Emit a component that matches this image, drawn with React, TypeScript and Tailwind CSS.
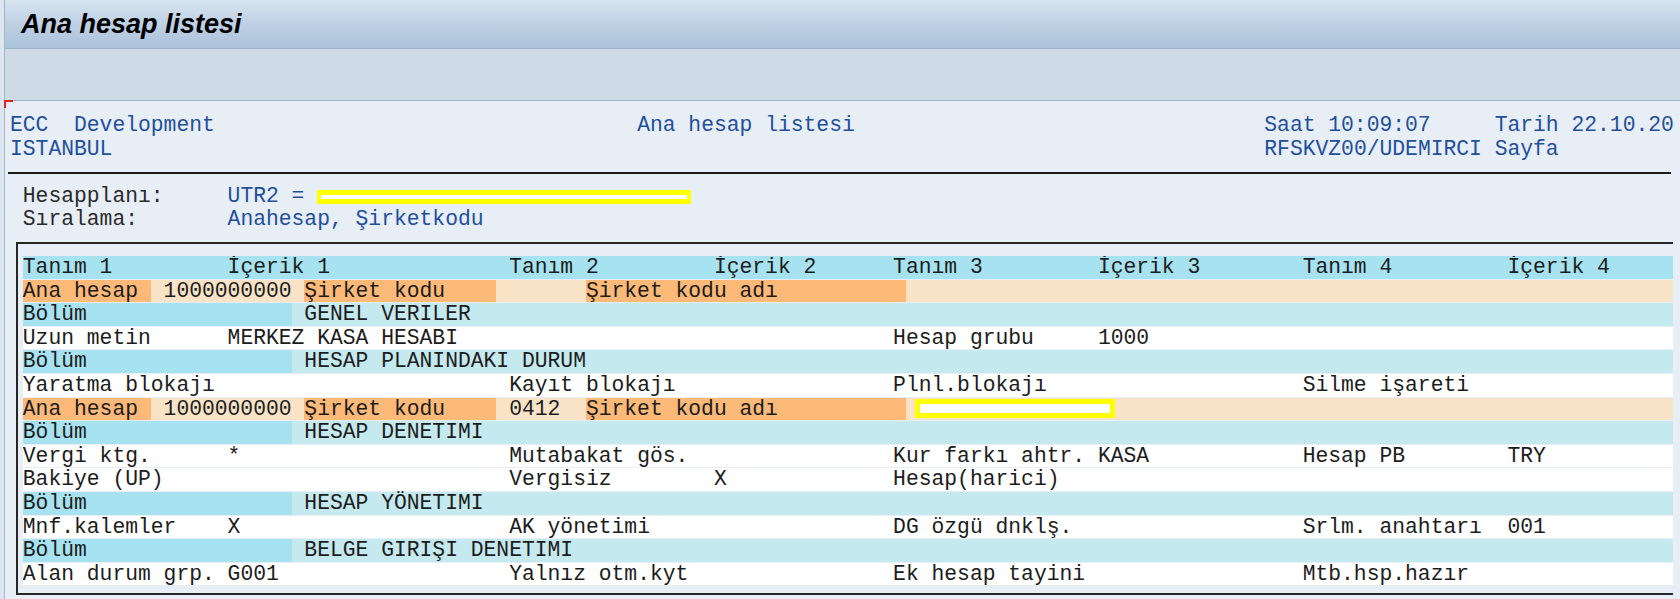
import React from 'react';

type Row =
  | { kind: 'head'; cells: string[] }
  | { kind: 'data'; cells: string[] }
  | { kind: 'account'; code: string; masked?: boolean }
  | { kind: 'section'; title: string };

const rows: Row[] = [
  { kind: 'head', cells: ['Tanım 1', 'İçerik 1', 'Tanım 2', 'İçerik 2', 'Tanım 3', 'İçerik 3', 'Tanım 4', 'İçerik 4'] },
  { kind: 'account', code: '' },
  { kind: 'section', title: 'GENEL VERILER' },
  { kind: 'data', cells: ['Uzun metin', 'MERKEZ KASA HESABI', '', '', 'Hesap grubu', '1000', '', ''] },
  { kind: 'section', title: 'HESAP PLANINDAKI DURUM' },
  { kind: 'data', cells: ['Yaratma blokajı', '', 'Kayıt blokajı', '', 'Plnl.blokajı', '', 'Silme işareti', ''] },
  { kind: 'account', code: '0412', masked: true },
  { kind: 'section', title: 'HESAP DENETIMI' },
  { kind: 'data', cells: ['Vergi ktg.', '*', 'Mutabakat gös.', '', 'Kur farkı ahtr.', 'KASA', 'Hesap PB', 'TRY'] },
  { kind: 'data', cells: ['Bakiye (UP)', '', 'Vergisiz', 'X', 'Hesap(harici)', '', '', ''] },
  { kind: 'section', title: 'HESAP YÖNETIMI' },
  { kind: 'data', cells: ['Mnf.kalemler', 'X', 'AK yönetimi', '', 'DG özgü dnklş.', '', 'Srlm. anahtarı', '001'] },
  { kind: 'section', title: 'BELGE GIRIŞI DENETIMI' },
  { kind: 'data', cells: ['Alan durum grp.', 'G001', 'Yalnız otm.kyt', '', 'Ek hesap tayini', '', 'Mtb.hsp.hazır', ''] },
];

// one list line in the SAP report
const line = 'flex h-[23.6px] shrink-0 items-center whitespace-pre';
const rowBox = 'h-[23.6px] shrink-0 border-b border-[#e8eef6] whitespace-pre text-[#1c1c1c]';
const grid = 'grid grid-cols-[16ch_22ch_16ch_14ch_16ch_16ch_16ch_1fr]';

function ListRow({ row }: { row: Row }) {
  if (row.kind === 'head' || row.kind === 'data') {
    return (
      <div className={`${rowBox} ${grid} ${row.kind === 'head' ? 'bg-[#a7e2f0]' : 'bg-white'}`}>
        {row.cells.map((c, i) => (
          <span key={i} className="overflow-hidden">{c}</span>
        ))}
      </div>
    );
  }

  if (row.kind === 'section') {
    return (
      <div className={`${rowBox} flex`}>
        <span className="w-[21ch] shrink-0 bg-[#a7e2f0]">Bölüm</span>
        <span className="flex-1 bg-[#c4e9ee] pl-[1ch]">{row.title}</span>
      </div>
    );
  }

  return (
    <div className={`${rowBox} flex`}>
      <span className="w-[10ch] shrink-0 bg-[#fcb978]">Ana hesap</span>
      <span className="w-[12ch] shrink-0 bg-[#f8e3c7] pl-[1ch]">1000000000</span>
      <span className="w-[15ch] shrink-0 bg-[#fcb978]">Şirket kodu</span>
      <span className="w-[7ch] shrink-0 bg-[#f8e3c7] pl-[1ch]">{row.code}</span>
      <span className="w-[25ch] shrink-0 bg-[#fcb978]">Şirket kodu adı</span>
      <span className="flex flex-1 items-center bg-[#f8e3c7]">
        {row.masked && <span className="ml-[9px] h-[19px] w-[200px] border-[5px] border-[#ffff00] bg-white" />}
      </span>
    </div>
  );
}

export default function App() {
  return (
    <div className="relative flex h-[599px] w-[1680px] overflow-hidden bg-[#e8eef6]">
      {/* window edge */}
      <div className="w-[5px] shrink-0 border-r border-[#a3b5c8] bg-[#dde6ef]" />

      <div className="flex min-w-0 flex-1 flex-col">
        {/* title bar */}
        <div className="flex h-[49px] shrink-0 items-center border-b border-[#9db2c8] bg-gradient-to-b from-[#d8e5f1] via-[#bed0e3] to-[#abc2db] pl-[16px]">
          <h1 className="font-['Liberation_Sans',Arial,sans-serif] text-[27px] leading-none font-bold italic text-black">
            Ana hesap listesi
          </h1>
        </div>

        {/* application toolbar (empty) */}
        <div className="h-[52px] shrink-0 border-b border-[#a3b5c8] bg-[#cedbe7]" />

        {/* list output */}
        <div className="w-[1668px] overflow-hidden pt-[13px] pl-[5px] font-['Liberation_Mono','Courier_New',monospace] text-[21.33px] leading-[23.6px]">
          <div className={`${line} text-[#1f4f9d]`}>
            <span className="w-[49ch] shrink-0">ECC  Development</span>
            <span className="w-[49ch] shrink-0">Ana hesap listesi</span>
            <span className="w-[18ch] shrink-0">Saat 10:09:07</span>
            <span className="shrink-0">Tarih 22.10.20</span>
          </div>
          <div className={`${line} text-[#1f4f9d]`}>
            <span className="w-[98ch] shrink-0">ISTANBUL</span>
            <span className="shrink-0">RFSKVZ00/UDEMIRCI Sayfa</span>
          </div>
          <div className={line}>
            <div className="ml-[-2px] h-[2px] w-full bg-[#1a1a1a]" />
          </div>
          <div className={line}>
            <span className="w-[17ch] shrink-0 pl-[1ch] text-[#2a2a2a]">Hesapplanı:</span>
            <span className="w-[7ch] shrink-0 text-[#1f4f9d]">UTR2 =</span>
            <span className="h-[14px] w-[374px] shrink-0 border-x-4 border-y-[5px] border-[#ffff00] bg-white" />
          </div>
          <div className={line}>
            <span className="w-[17ch] shrink-0 pl-[1ch] text-[#2a2a2a]">Sıralama:</span>
            <span className="shrink-0 text-[#1f4f9d]">Anahesap, Şirketkodu</span>
          </div>

          {/* framed detail table */}
          <div className="mt-[10px] ml-[6px] flex flex-col border-t-2 border-b-2 border-l-2 border-[#262626] pt-[12px] pb-[7px] pl-[4.8px]">
            {rows.map((r, i) => (
              <ListRow key={i} row={r} />
            ))}
          </div>
        </div>
      </div>

      {/* list cursor mark */}
      <div className="absolute top-[100px] left-[4px] h-[8px] w-[9px] border-t-2 border-l-2 border-[#e2231a]" />
    </div>
  );
}
